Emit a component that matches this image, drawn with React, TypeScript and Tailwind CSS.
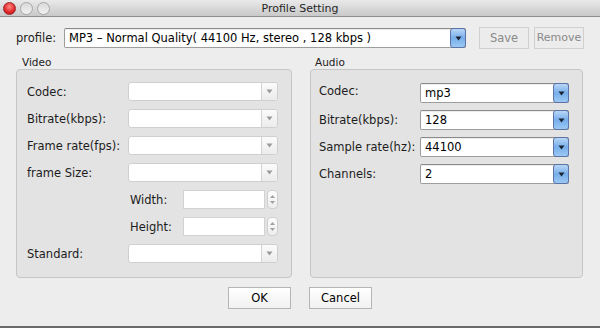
import React from "react";

const font = { fontFamily: '"Lucida Grande", "DejaVu Sans", sans-serif' };

function GrayArrow() {
  return (
    <div className="w-[16px] h-full border-l border-[#d4d4d4] flex items-center justify-center rounded-r-[3px] bg-gradient-to-b from-[#fbfbfb] to-[#ececec]">
      <svg width="7" height="5" viewBox="0 0 7 5">
        <path d="M0.5 0.5 L6.5 0.5 L3.5 4.5 Z" fill="#9a9a9a" />
      </svg>
    </div>
  );
}

function BlueArrow() {
  return (
    <div className="w-[16px] h-[calc(100%+2px)] -my-[1px] -mr-[1px] rounded-[3px] border border-[#5a73a8] flex items-center justify-center bg-gradient-to-b from-[#b9d6f6] via-[#76aeea] to-[#9cc8f4]">
      <svg width="7" height="5" viewBox="0 0 7 5">
        <path d="M0.5 0.5 L6.5 0.5 L3.5 4.5 Z" fill="#1b2433" />
      </svg>
    </div>
  );
}

function GraySelect({ w }: { w: string }) {
  return (
    <div className={`${w} h-[19px] bg-white border border-[#cfcfcf] rounded-[3px] flex justify-end`}>
      <GrayArrow />
    </div>
  );
}

function BlueSelect({ value, w, h }: { value: string; w: string; h: string }) {
  return (
    <div className={`${w} ${h} bg-white border border-[#9d9d9d] border-t-[#8a8a8a] rounded-[2px] flex items-center shadow-[inset_0_1px_1px_rgba(0,0,0,0.08)]`}>
      <div className="flex-1 min-w-0 pl-[4px] text-[11.5px] text-black leading-[14px] whitespace-nowrap">{value}</div>
      <BlueArrow />
    </div>
  );
}

function Spinner() {
  return (
    <div className="w-[95px] h-[19px] flex items-center gap-[2px]">
      <div className="flex-1 h-full bg-white border border-[#d2d2d2]" />
      <div className="w-[11px] h-[19px] border border-[#cfcfcf] rounded-[4px] bg-gradient-to-b from-[#fdfdfd] to-[#ededed] flex flex-col items-center justify-center gap-[3px]">
        <svg width="5" height="3" viewBox="0 0 5 3"><path d="M0 3 L5 3 L2.5 0 Z" fill="#a0a0a0" /></svg>
        <svg width="5" height="3" viewBox="0 0 5 3"><path d="M0 0 L5 0 L2.5 3 Z" fill="#a0a0a0" /></svg>
      </div>
    </div>
  );
}

function Label({ children, w }: { children: React.ReactNode; w: string }) {
  return <div className={`${w} text-[11.5px] text-[#1c1c1c] leading-[14px] whitespace-nowrap`}>{children}</div>;
}

export default function App() {
  return (
    <div className="w-[600px] h-[328px] bg-[#ededed] flex flex-col border-b-2 border-[#6b6b6b] overflow-hidden" style={font}>
      {/* Title bar */}
      <div className="h-[17px] relative bg-gradient-to-b from-[#e9e9e9] to-[#c9c9c9] border-b border-[#8e8e8e] flex items-center justify-center">
        <div className="absolute left-[3px] top-[2px] flex gap-[4px]">
          <div className="w-[13px] h-[13px] rounded-full bg-[radial-gradient(circle_at_50%_35%,#ff8a80,#e0262a_60%,#a3151a)] border border-[#9b2a2a]" />
          <div className="w-[13px] h-[13px] rounded-full bg-gradient-to-b from-[#d9d9d9] to-[#f2f2f2] border border-[#a6a6a6]" />
          <div className="w-[13px] h-[13px] rounded-full bg-gradient-to-b from-[#d9d9d9] to-[#f2f2f2] border border-[#a6a6a6]" />
        </div>
        <span className="text-[11px] text-[#262626] leading-[13px]">Profile Setting</span>
      </div>

      {/* Profile row */}
      <div className="mt-[10px] pl-[16px] flex items-center h-[22px]">
        <Label w="w-[48px]">profile:</Label>
        <BlueSelect w="w-[402px]" h="h-[20px]" value="MP3 – Normal Quality( 44100 Hz, stereo , 128 kbps )" />
        <div className="ml-[13px] w-[50px] h-[22px] border border-[#d0d0d0] bg-[#ececec] flex items-center justify-center text-[11.5px] leading-[14px] text-[#8a8a8a]">Save</div>
        <div className="ml-[5px] w-[50px] h-[22px] border border-[#d0d0d0] bg-[#ececec] flex items-center justify-center text-[11px] leading-[14px] text-[#8a8a8a] whitespace-nowrap">Remove</div>
      </div>

      {/* Groups */}
      <div className="mt-[7px] pl-[16px] flex gap-[18px]">
        {/* Video */}
        <div className="w-[276px] flex flex-col">
          <div className="pl-[6px] h-[13px] text-[10.5px] text-[#222] leading-[13px]">Video</div>
          <div className="h-[209px] bg-[#e3e3e3] border border-[#c6c6c6] rounded-[4px] pt-[12px] pl-[10px] flex flex-col gap-[8px]">
            <div className="flex items-center"><Label w="w-[101px]">Codec:</Label><GraySelect w="w-[150px]" /></div>
            <div className="flex items-center"><Label w="w-[101px]">Bitrate(kbps):</Label><GraySelect w="w-[150px]" /></div>
            <div className="flex items-center"><Label w="w-[101px]">Frame rate(fps):</Label><GraySelect w="w-[150px]" /></div>
            <div className="flex items-center"><Label w="w-[101px]">frame Size:</Label><GraySelect w="w-[150px]" /></div>
            <div className="flex items-center pl-[103px]"><Label w="w-[53px]">Width:</Label><Spinner /></div>
            <div className="flex items-center pl-[103px]"><Label w="w-[53px]">Height:</Label><Spinner /></div>
            <div className="flex items-center"><Label w="w-[101px]">Standard:</Label><GraySelect w="w-[150px]" /></div>
          </div>
        </div>
        {/* Audio */}
        <div className="w-[273px] flex flex-col">
          <div className="pl-[5px] h-[13px] text-[10.5px] text-[#222] leading-[13px]">Audio</div>
          <div className="h-[209px] bg-[#e3e3e3] border border-[#c6c6c6] rounded-[4px] pt-[13px] pl-[8px] flex flex-col gap-[7px]">
            <div className="flex h-[20px]"><div className="w-[101px] text-[11.5px] text-[#1c1c1c] leading-[14px] pt-[1px]">Codec:</div><BlueSelect w="w-[149px]" h="h-[20px]" value="mp3" /></div>
            <div className="flex items-center"><Label w="w-[101px]">Bitrate(kbps):</Label><BlueSelect w="w-[149px]" h="h-[20px]" value="128" /></div>
            <div className="flex items-center"><Label w="w-[101px]">Sample rate(hz):</Label><BlueSelect w="w-[149px]" h="h-[20px]" value="44100" /></div>
            <div className="flex items-center"><Label w="w-[101px]">Channels:</Label><BlueSelect w="w-[149px]" h="h-[20px]" value="2" /></div>
          </div>
        </div>
      </div>

      {/* Buttons */}
      <div className="mt-[9px] flex justify-center gap-[18px]">
        <div className="w-[63px] h-[22px] border border-[#b5b5b5] bg-gradient-to-b from-white to-[#f1f1f1] flex items-center justify-center text-[11.5px] leading-[14px] text-black">OK</div>
        <div className="w-[63px] h-[22px] border border-[#b5b5b5] bg-gradient-to-b from-white to-[#f1f1f1] flex items-center justify-center text-[11.5px] leading-[14px] text-black">Cancel</div>
      </div>
    </div>
  );
}
